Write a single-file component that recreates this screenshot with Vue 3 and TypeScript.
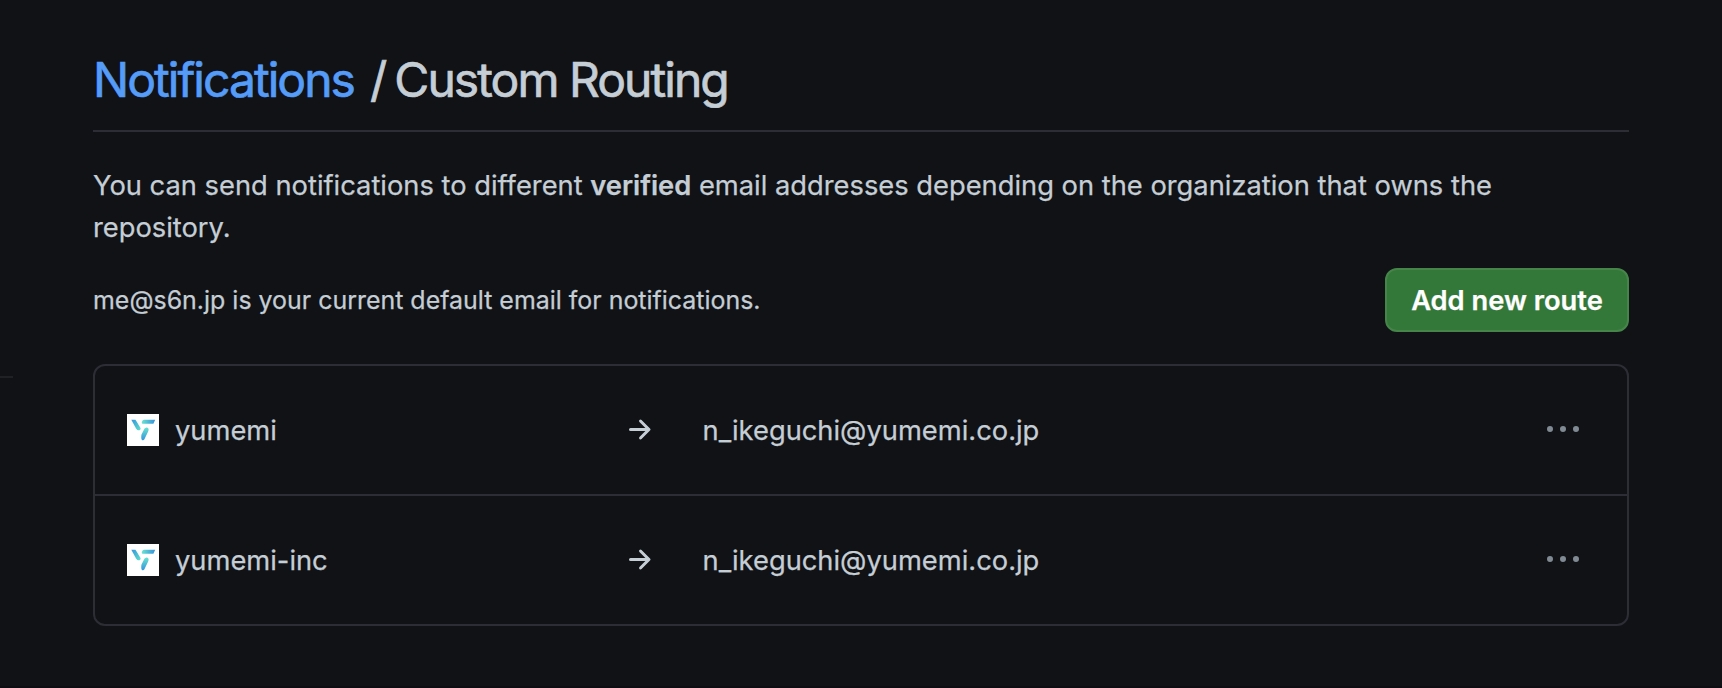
<script setup lang="ts">
interface Route { org: string; email: string }
const routes: Route[] = [
  { org: 'yumemi', email: 'n_ikeguchi@yumemi.co.jp' },
  { org: 'yumemi-inc', email: 'n_ikeguchi@yumemi.co.jp' },
]
</script>

<template>
  <main class="page">
    <span class="edge"></span>
    <h1 class="title"><a class="link">Notifications</a><span class="slash">/</span><span class="current">Custom Routing</span></h1>
    <p class="intro">You can send notifications to different <b>verified</b> email addresses depending on the organization that owns the<br>repository.</p>
    <div class="bar">
      <span class="default">me@s6n.jp is your current default email for notifications.</span>
      <button class="add">Add new route</button>
    </div>
    <ul class="routes">
      <li v-for="r in routes" :key="r.org" class="route">
        <svg class="avatar" viewBox="0 0 32 32">
          <defs>
            <linearGradient id="armLeft" x1="0" y1="0" x2="1" y2="1"><stop offset="0" stop-color="#3495dc" /><stop offset="1" stop-color="#5fe0cc" /></linearGradient>
            <linearGradient id="armTop" x1="0" y1="0" x2="1" y2="0"><stop offset="0" stop-color="#6be3cf" /><stop offset="1" stop-color="#3491dc" /></linearGradient>
            <linearGradient id="armBottom" x1="0" y1="0" x2="0" y2="1"><stop offset="0" stop-color="#6be3cf" /><stop offset="1" stop-color="#3495dc" /></linearGradient>
          </defs>
          <rect width="32" height="32" fill="#fff" />
          <path d="M4.3 5.7h4.2l5 8.2q.4 2.3-1.900 2.300-1.500 0-2.400-1.500Z" fill="url(#armLeft)" />
          <path d="M17 5.700h11.200l-1.800 4H15.300q-1-.8-.3-2.300.6-1.500 2-1.700Z" fill="url(#armTop)" />
          <path d="M19.400 13.400q2.100-.2 2.200 1.800.1 1-.7 2.700l-3.600 7.600q-1 1.200-2.300.5-1.100-.8-.6-5.200l3-6Q18.200 13.500 19.400 13.400Z" fill="url(#armBottom)" />
        </svg>
        <span class="org">{{ r.org }}</span>
        <svg class="arrow" viewBox="0 0 16 16"><path fill="currentColor" d="M8.22 2.97a.75.75 0 0 1 1.06 0l4.25 4.25a.75.75 0 0 1 0 1.06l-4.25 4.25a.751.751 0 0 1-1.042-.018.751.751 0 0 1-.018-1.042l2.97-2.97H3.75a.75.75 0 0 1 0-1.5h7.44L8.22 4.03a.75.75 0 0 1 0-1.06Z" /></svg>
        <span class="email">{{ r.email }}</span>
        <svg class="dots" viewBox="0 0 16 16"><path fill="currentColor" d="M8 9a1.5 1.5 0 1 0 0-3 1.5 1.5 0 0 0 0 3ZM1.5 9a1.5 1.5 0 1 0 0-3 1.5 1.5 0 0 0 0 3Zm13 0a1.5 1.5 0 1 0 0-3 1.5 1.5 0 0 0 0 3Z" /></svg>
      </li>
    </ul>
  </main>
</template>

<style>
body { background: #101216; }
</style>
<style scoped>
.page { box-sizing: border-box; height: 688px; padding: 48px 93px 0; position: relative; overflow: hidden; color: #c5cdd5; font: 400 27.3px/42px Inter, sans-serif; -webkit-text-stroke: .25px currentColor; border-bottom: 2px solid #0d0d12; }
.edge { position: absolute; left: 0; top: 376px; width: 13px; height: 2px; background: #1f2125; }
.title { display: flex; margin: 0; height: 82px; border-bottom: 2px solid #2d2d35; font-size: 48px; line-height: 64px; font-weight: 400; letter-spacing: -1.95px; -webkit-text-stroke-width: .7px; white-space: nowrap; }
.link { color: #549cf8; }
.slash { margin: 0 9px 0 16px; }
.intro { margin: 33px 0 0; white-space: nowrap; }
.intro b { font-weight: 600; }
.bar { display: flex; align-items: center; justify-content: space-between; margin-top: 19px; height: 64px; }
.default { font-size: 24.95px; }
.add { box-sizing: border-box; width: 244px; height: 64px; border: 2px solid #46854a; border-radius: 12px; background: #347839; color: #fff; font: 600 27.3px/40px Inter, sans-serif; padding: 1px 0 0; white-space: nowrap; }
.routes { box-sizing: border-box; height: 262px; margin: 32px 0 0; padding: 0; list-style: none; border: 2px solid #2d2d35; border-radius: 12px; }
.route { box-sizing: border-box; display: flex; align-items: center; height: 128px; padding: 0 48px 0 32px; }
.route + .route { height: 130px; border-top: 2px solid #2d2d35; }
.avatar { width: 32px; height: 32px; }
.org { width: 448px; margin-left: 16px; padding-top: 2px; }
.arrow { width: 32px; height: 32px; }
.email { flex: 1; margin-left: 47.5px; padding-top: 2px; }
.dots { width: 32px; height: 32px; color: #818a93; overflow: visible; }
</style>
